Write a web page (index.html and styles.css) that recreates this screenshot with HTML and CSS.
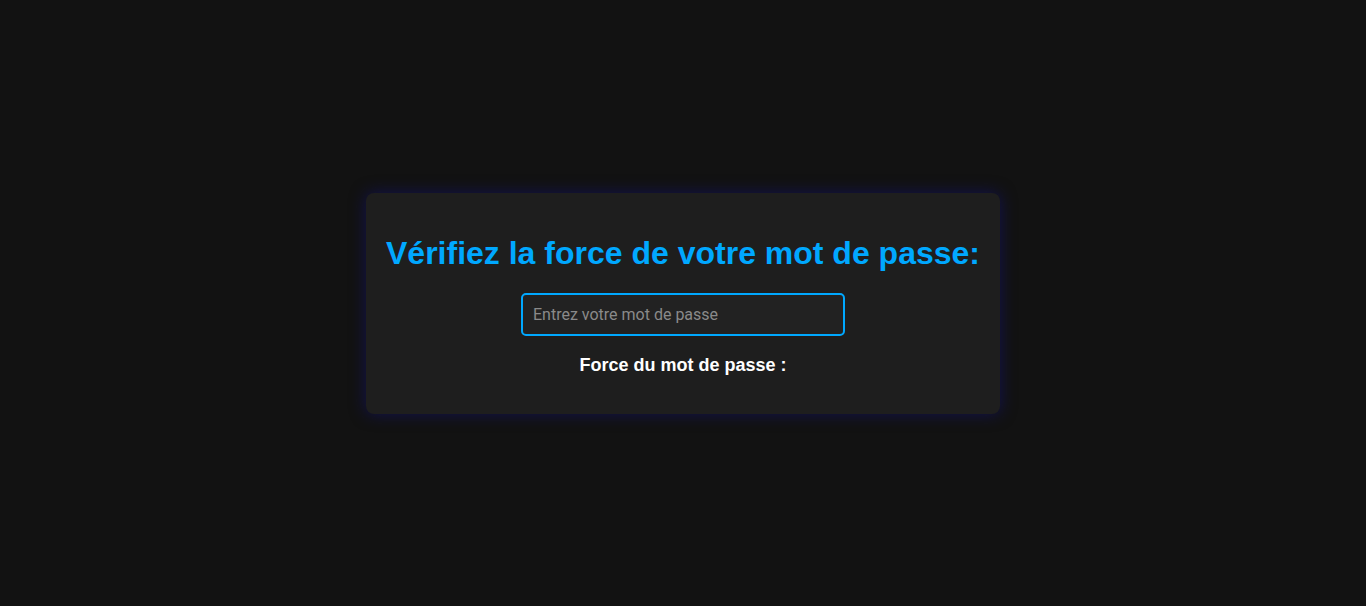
FILE: index.html
```html
<!DOCTYPE html>
<html lang="fr">
<head>
<meta charset="utf-8">
<title>Force du mot de passe</title>
<link rel="stylesheet" href="styles.css">
</head>
<body>
<main class="page">
  <section class="card">
    <h2 class="title">Vérifiez la force de votre mot de passe:</h2>
    <input class="field" type="password" placeholder="Entrez votre mot de passe">
    <p class="strength">Force du mot de passe :</p>
  </section>
</main>
</body>
</html>
```

FILE: styles.css
```css
html, body {
  margin: 0;
  padding: 0;
  height: 100%;
}
body {
  background: #121212;
  font-family: "Liberation Sans", Arial, sans-serif;
  color: #ffffff;
}
.page {
  height: 100%;
  display: flex;
  align-items: center;
  justify-content: center;
}
.card {
  width: 634px;
  box-sizing: border-box;
  padding: 20px;
  background: #1e1e1e;
  border-radius: 8px;
  box-shadow: 0 0 16px rgba(18, 18, 130, 0.55);
  display: flex;
  flex-direction: column;
  align-items: center;
  text-align: center;
}
.title {
  margin: 22px 0 21px;
  font-size: 32px;
  line-height: 37px;
  font-weight: bold;
  color: #00a8ff;
  white-space: nowrap;
}
.field {
  width: 324px;
  height: 43px;
  box-sizing: border-box;
  padding: 0 10px;
  border: 2px solid #00a8ff;
  border-radius: 5px;
  background: #222222;
  color: #ffffff;
  font-family: Roboto, sans-serif;
  font-size: 16px;
  outline: none;
}
.field::placeholder {
  color: #8a8a8a;
}
.strength {
  margin: 19px 0 18px;
  font-size: 18px;
  line-height: 21px;
  font-weight: bold;
}
```
